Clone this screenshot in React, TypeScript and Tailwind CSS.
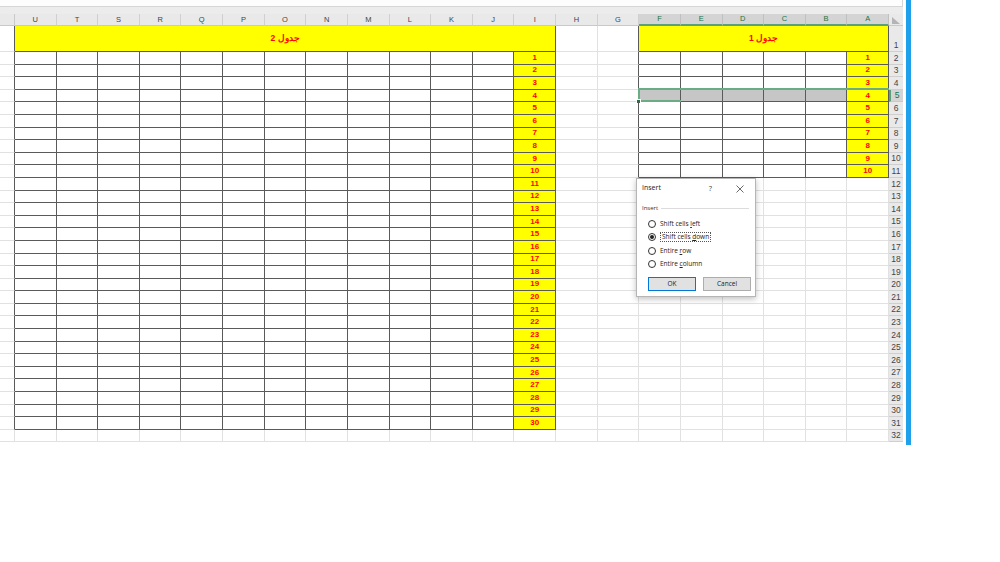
import React from "react";

// Column letters as they appear on screen (sheet is right-to-left, so A sits at the right).
const COLS = ["U", "T", "S", "R", "Q", "P", "O", "N", "M", "L", "K", "J", "I", "H", "G", "F", "E", "D", "C", "B", "A"];
const LAST_ROW = 32;

// Table 2 covers U..I (0..12) rows 1..31, table 1 covers F..A (15..20) rows 1..11.
const inT2 = (c: number, r: number) => c >= 0 && c <= 12 && r >= 1 && r <= 31;
const inT1 = (c: number, r: number) => c >= 15 && c <= 20 && r >= 1 && r <= 11;
const inTable = (c: number, r: number) => inT1(c, r) || inT2(c, r);

const SELECTED_ROW = 5;

const cellBorders = (c: number, r: number) => {
  const right = inTable(c, r) || inTable(c + 1, r) ? "border-r-[#5a5a5a]" : "border-r-[#e1e1e1]";
  const bottom = inTable(c, r) ? "border-b-[#5a5a5a]" : "border-b-[#e1e1e1]";
  return `border-r border-b ${right} ${bottom}`;
};

const YellowNum = ({ n }: { n: number }) => (
  <div className="flex h-full items-center justify-center bg-[#ffff00] text-[8px] font-bold leading-none text-[#ff0000]">
    {n}
  </div>
);

const HeaderRow = () => (
  <>
    <div className="border-b border-r border-[#c9c9c9] bg-[#e9e9e9]" />
    {COLS.map((col, c) => {
      const hi = c >= 15;
      return (
        <div
          key={col}
          className={
            hi
              ? "flex items-center justify-center border-r border-b-2 border-r-[#c0c0c0] border-b-[#5aa07a] bg-[#d4d4d4] text-[7.5px] text-[#217346]"
              : "flex items-center justify-center border-r border-b border-r-[#d0d0d0] border-b-[#c9c9c9] bg-[#e9e9e9] text-[7.5px] text-[#444]"
          }
        >
          {col}
        </div>
      );
    })}
    <div className="flex items-end justify-start border-b border-[#c9c9c9] bg-[#e9e9e9] pb-[1px] pl-[3px]">
      <svg width="8" height="7" viewBox="0 0 8 7">
        <polygon points="0,0 0,7 8,7" fill="#b4b4b4" />
      </svg>
    </div>
  </>
);

const RowHeader = ({ r }: { r: number }) => (
  <div
    className={
      r === SELECTED_ROW
        ? "flex items-end justify-center border-b border-l-2 border-b-[#c9c9c9] border-l-[#5aa07a] bg-[#d4d4d4] text-[8.5px] leading-[11px] text-[#217346]"
        : "flex items-end justify-center border-b border-[#cfcfcf] bg-[#e9e9e9] text-[8.5px] leading-[11px] text-[#444]"
    }
  >
    {r}
  </div>
);

const FirstRow = () => (
  <>
    <div className={cellBorders(-1, 1)} />
    <div
      dir="rtl"
      className="col-span-13 flex items-center justify-center border-r border-b border-[#5a5a5a] bg-[#ffff00] text-[8.5px] font-bold text-[#ff0000]"
    >
      جدول 2
    </div>
    <div className={cellBorders(13, 1)} />
    <div className={cellBorders(14, 1)} />
    <div
      dir="rtl"
      className="col-span-6 flex items-center justify-center border-r border-b border-[#5a5a5a] bg-[#ffff00] text-[8.5px] font-bold text-[#ff0000]"
    >
      جدول 1
    </div>
    <RowHeader r={1} />
  </>
);

const DataRow = ({ r }: { r: number }) => (
  <>
    <div className={cellBorders(-1, r)} />
    {COLS.map((col, c) => {
      let content: React.ReactNode = null;
      let bg = "";
      if (c === 12 && r <= 31) content = <YellowNum n={r - 1} />;
      if (c === 20 && r <= 11) content = <YellowNum n={r - 1} />;
      if (r === SELECTED_ROW && c >= 15 && c <= 19) bg = "bg-[#c6c6c6]";
      return (
        <div key={col} className={`relative ${cellBorders(c, r)} ${bg}`}>
          {content}
          {r === SELECTED_ROW && c === 15 ? (
            <>
              <div className="pointer-events-none absolute -left-px -top-[1.5px] h-[calc(100%+2.5px)] w-[251px] border-2 border-[#6aac86]" />
              <div className="absolute -bottom-[3px] -left-[3px] h-[5px] w-[5px] border border-white bg-[#217346]" />
            </>
          ) : null}
        </div>
      );
    })}
    <RowHeader r={r} />
  </>
);

const Radio = ({ checked }: { checked?: boolean }) => (
  <span className="flex h-[8px] w-[8px] items-center justify-center rounded-full border border-[#333] bg-white">
    {checked ? <span className="h-[4px] w-[4px] rounded-full bg-[#222]" /> : null}
  </span>
);

const InsertDialog = () => (
  <div className="absolute left-[636px] top-[178px] flex h-[119px] w-[120px] flex-col border border-[#b5b5b5] bg-white font-['Open_Sans',sans-serif] text-[6.5px] text-[#222] shadow-[0_2px_6px_rgba(0,0,0,0.25)]">
    <div className="flex h-[19px] items-center pl-[5px]">
      <span className="flex-1 text-[7px]">Insert</span>
      <span className="mr-[24px] text-[7.5px] text-[#444]">?</span>
      <svg className="mr-[11px]" width="8" height="8" viewBox="0 0 8 8">
        <path d="M0.5 0.5 L7.5 7.5 M7.5 0.5 L0.5 7.5" stroke="#444" strokeWidth="0.8" />
      </svg>
    </div>
    <div className="mt-[6px] flex h-[8px] items-center pl-[5px] pr-[6px]">
      <span className="text-[6px] text-[#333]">Insert</span>
      <span className="ml-[3px] h-px flex-1 bg-[#dcdcdc]" />
    </div>
    <div className="mt-[5px] flex flex-col pl-[11px]">
      <label className="flex h-[13.5px] items-center gap-[4px]">
        <Radio />
        <span>
          Shift cells <u>l</u>eft
        </span>
      </label>
      <label className="flex h-[13.5px] items-center gap-[4px]">
        <Radio checked />
        <span className="border border-dotted border-[#555] px-px leading-[8px]">
          Shift cells <u>d</u>own
        </span>
      </label>
      <label className="flex h-[13.5px] items-center gap-[4px]">
        <Radio />
        <span>
          Entire <u>r</u>ow
        </span>
      </label>
      <label className="flex h-[13.5px] items-center gap-[4px]">
        <Radio />
        <span>
          Entire <u>c</u>olumn
        </span>
      </label>
    </div>
    <div className="mt-[6px] flex gap-[7px] pl-[11px]">
      <button className="flex h-[14px] w-[48px] items-center justify-center border border-[#0078d7] bg-[#e1e1e1] text-[6.5px] text-[#222]">
        OK
      </button>
      <button className="flex h-[14px] w-[48px] items-center justify-center border border-[#adadad] bg-[#e1e1e1] text-[6.5px] text-[#222]">
        Cancel
      </button>
    </div>
  </div>
);

export default function App() {
  const rows: number[] = [];
  for (let r = 2; r <= LAST_ROW; r++) rows.push(r);

  return (
    <div className="relative h-[562px] w-[1000px] overflow-hidden bg-white font-['Liberation_Sans',Arial,sans-serif]">
      <div className="flex">
        <div className="flex w-[903px] flex-col">
          {/* formula bar edge + gap above the column letters */}
          <div className="h-[7px] border-b border-r border-[#d6d6d6] bg-[#fdfdfd]" />
          <div className="h-[7px] bg-[#ececec]" />
          <div className="grid grid-cols-[15px_repeat(21,minmax(0,1fr))_14px] grid-rows-[12px_26px_repeat(31,12.6px)]">
            <HeaderRow />
            <FirstRow />
            {rows.map((r) => (
              <DataRow key={r} r={r} />
            ))}
          </div>
        </div>
        <div className="ml-[3px] h-[445px] w-[5px] bg-[#1ea1ea]" />
      </div>
      <InsertDialog />
    </div>
  );
}
